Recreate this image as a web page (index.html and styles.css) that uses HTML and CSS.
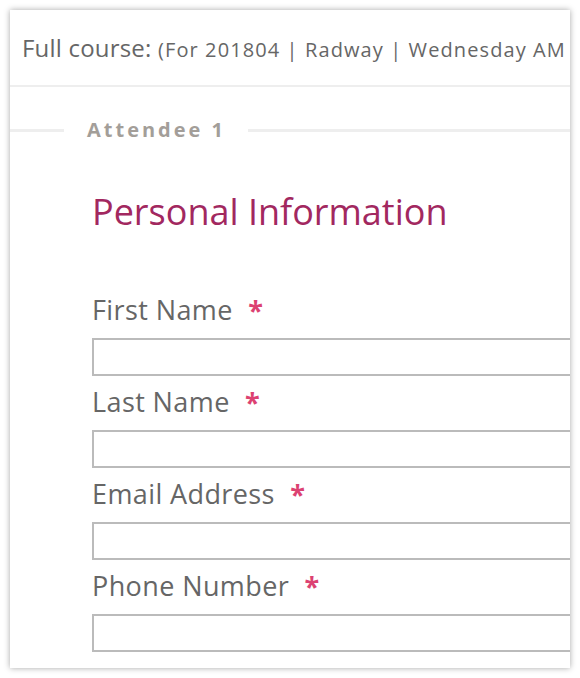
FILE: index.html
```html
<!DOCTYPE html>
<html lang="en">
<head>
  <meta charset="UTF-8">
  <meta name="viewport" content="width=device-width, initial-scale=1.0">
  <title>Registration</title>
  <link rel="stylesheet" href="styles.css">
</head>
<body>
  <div class="card">
    <div class="course">Full course: <span class="course-info">(For 201804 | Radway | Wednesday AM</span></div>
    <div class="attendee">
      <span class="line short"></span>
      <span class="attendee-title">Attendee 1</span>
      <span class="line"></span>
    </div>
    <div class="form">
      <h2>Personal Information</h2>
      <div class="field">
        <label for="first">First Name <span class="req">*</span></label>
        <input type="text" id="first">
      </div>
      <div class="field">
        <label for="last">Last Name <span class="req">*</span></label>
        <input type="text" id="last">
      </div>
      <div class="field">
        <label for="email">Email Address <span class="req">*</span></label>
        <input type="email" id="email">
      </div>
      <div class="field">
        <label for="phone">Phone Number <span class="req">*</span></label>
        <input type="tel" id="phone">
      </div>
    </div>
  </div>
</body>
</html>
```

FILE: styles.css
```css
/* Page */
html, body {
  overflow: hidden;
}
body {
  margin: 0;
  padding: 10px;
  background: #ffffff;
  font-family: "Open Sans", "Noto Sans", sans-serif;
  color: #666666;
}
.card {
  width: 560px;
  height: 658px;
  background: #ffffff;
  box-shadow: 0 0 6px rgba(0, 0, 0, 0.35);
  overflow: hidden;
}
.course {
  height: 75px;
  line-height: 75px;
  padding-left: 12px;
  font-size: 24px;
  letter-spacing: 0.2px;
  white-space: nowrap;
  border-bottom: 2px solid #eeeeee;
}
.course-info {
  font-size: 20px;
  letter-spacing: 1.1px;
}
.attendee {
  display: flex;
  align-items: center;
  margin-top: 31px;
  height: 24px;
}
.line {
  flex: 1;
  height: 3px;
  background: #eeeeee;
}
.line.short {
  flex: 0 0 54px;
}
.attendee-title {
  padding: 0 22px 0 23px;
  font-size: 20px;
  font-weight: 700;
  line-height: 24px;
  letter-spacing: 3px;
  color: #a39e99;
}
.form {
  padding-left: 82px;
}
h2 {
  margin: 46px 0 55px;
  font-size: 36px;
  font-weight: 400;
  line-height: 48px;
  color: #a2285f;
}
.field {
  margin-bottom: 7px;
}
.field label {
  display: block;
  padding-top: 1px;
  margin-bottom: 10px;
  font-size: 27px;
  line-height: 36px;
  letter-spacing: 0.4px;
  color: #666666;
}
.req {
  margin-left: 8px;
  font-weight: 700;
  color: #dc4272;
}
.field input {
  display: block;
  box-sizing: border-box;
  width: 620px;
  height: 38px;
  margin: 0;
  border: 2px solid #bbbbbb;
  border-radius: 0;
  background: #ffffff;
}
```
